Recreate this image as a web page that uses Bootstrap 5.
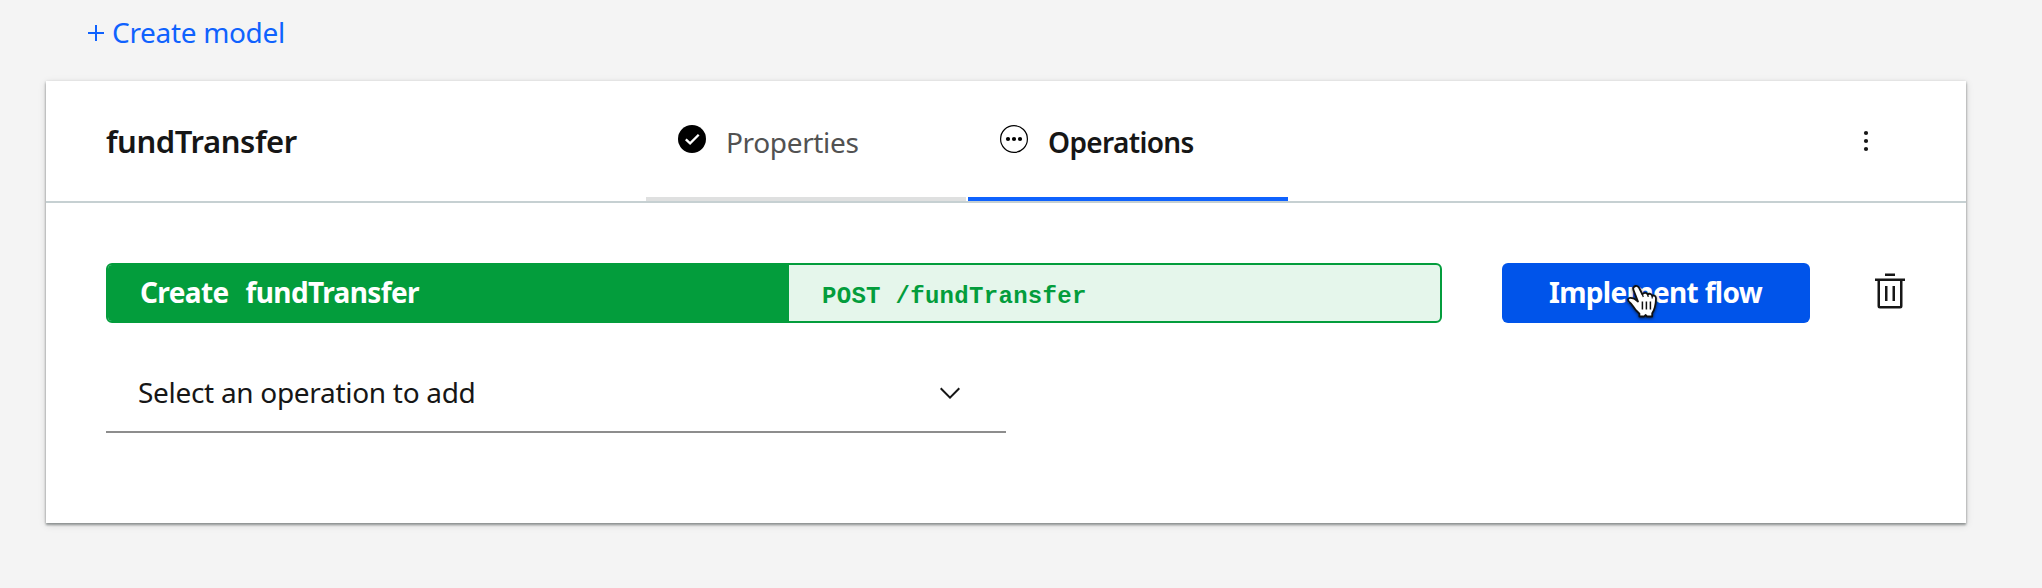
<!DOCTYPE html>
<html lang="en">
<head>
<meta charset="utf-8">
<title>fundTransfer</title>
<link href="https://cdn.jsdelivr.net/npm/bootstrap@5.3.0/dist/css/bootstrap.min.css" rel="stylesheet">
<style>
  body { min-height: 100vh; background: #f4f4f4; color: #161616; font-family: "Noto Sans", "Open Sans", sans-serif; font-size: 28px; font-weight: 400; line-height: 40px; }
  svg { display: block; flex: none; }
  .create-link { color: #0f62fe; height: 81px; padding: 12px 0 0 88px; gap: 8px; letter-spacing: -.32px; }
  .create-link svg { margin-top: 13px; }
  .model-panel { margin: 0 76px 0 46px; height: 442px; background: #fff; box-shadow: 0 2px 2px rgba(80,88,88,.45), 0 1px 3px rgba(0,0,0,.2), 0 2px 8px rgba(0,0,0,.12); }
  .model-head { height: 122px; border-bottom: 2px solid #c6d0d2; padding-left: 60px; padding-right: 84px; }
  .model-name { width: 540px; font-size: 31px; font-weight: 600; letter-spacing: -.4px; padding: 40px 0 0; }
  .steps { gap: 2px; }
  .step { width: 320px; height: 120px; border-bottom: 4px solid #dfe0e0; padding: 41px 0 0 30px; gap: 18px; color: #525252; letter-spacing: -.35px; }
  .step.active { border-color: #0f62fe; color: #161616; font-weight: 600; letter-spacing: -.65px; }
  .kebab { margin-top: 42px; }
  .model-body { padding: 60px 0 60px 60px; }
  .op-bar { width: 1336px; height: 60px; border-radius: 6px; border: 2px solid #039d3c; background: #e5f6eb; color: #039d3c; overflow: hidden; }
  .op-name { width: 681px; background: #039d3c; color: #fff; font-weight: 700; padding: 7px 0 0 32px; letter-spacing: -.62px; gap: 17px; }
  .op-path { font: 700 24px/40px "Liberation Mono", monospace; letter-spacing: .3px; padding: 12px 0 0 33px; white-space: pre; }
  .btn-flow { width: 308px; height: 60px; margin-left: 60px; border: 0; border-radius: 6px; background: #0054ea; color: #fff; font-size: 28px; font-weight: 700; line-height: 40px; letter-spacing: -.7px; padding: 9px 1px 11px 0; }
  .btn-flow:hover { background: #0054ea; color: #fff; }
  .pointer-hand { left: 122px; top: 20px; }
  .bin { margin: 8px 0 0 60px; }
  .op-select { width: 900px; height: 80px; margin-top: 30px; border-bottom: 2px solid #8d8d8d; padding: 19px 40px 0 32px; letter-spacing: -.3px; }
  .op-select svg { margin-top: 5px; }
</style>
</head>
<body>
<a class="create-link d-flex align-items-start text-decoration-none" href="#">
  <svg width="16" height="16"><path d="M8 0v16M0 8h16" stroke="#0f62fe" stroke-width="2"/></svg>
  <span>Create model</span>
</a>
<main class="model-panel">
  <header class="model-head d-flex align-items-start">
    <div class="model-name">fundTransfer</div>
    <nav class="steps d-flex">
      <div class="step d-flex align-items-start">
        <svg width="32" height="32" viewBox="0 0 32 32"><circle cx="16" cy="17" r="14"/><path d="M9.8 17.3l4.3 4.1 8.6-8.6" fill="none" stroke="#fff" stroke-width="2.3"/></svg>
        <span>Properties</span>
      </div>
      <div class="step active d-flex align-items-start">
        <svg width="32" height="32" viewBox="0 0 32 32"><circle cx="16" cy="17" r="13.4" fill="none" stroke="#000" stroke-width="1.2"/><circle cx="10" cy="17" r="2.1"/><circle cx="16" cy="17" r="2.1"/><circle cx="22" cy="17" r="2.1"/></svg>
        <span>Operations</span>
      </div>
    </nav>
    <svg class="kebab ms-auto" width="32" height="36" viewBox="0 0 32 36" fill="#161616"><circle cx="16" cy="10" r="2.1"/><circle cx="16" cy="18" r="2.1"/><circle cx="16" cy="26" r="2.1"/></svg>
  </header>
  <section class="model-body">
    <div class="d-flex">
      <div class="op-bar d-flex">
        <div class="op-name d-flex"><span>Create</span><span>fundTransfer</span></div>
        <div class="op-path">POST /fundTransfer</div>
      </div>
      <button class="btn btn-flow position-relative" type="button">Implement flow
        <svg class="pointer-hand position-absolute" width="36" height="42" viewBox="0 0 36 42">
          <g style="filter:drop-shadow(0 1.5px 1.5px rgba(0,0,0,.6))">
            <path d="M11.6 3C9.5 3.5 8.8 5.2 9.5 7.2L14 18.5C11.8 16.4 8.6 14.7 6 14.9C3.8 15.2 3.3 17.2 5 18.7C8.2 21 9.5 24.6 12.2 27.5L15.4 30.6V33.5H20.2L21.5 32L23 33.5H28.2V30.3C31 26.3 31.8 21 32 15.8C32.1 12.8 29.6 11.8 28.2 13C27.7 10.6 24.8 10.2 23.7 11.6C22.6 9.5 20.3 9.4 18.3 11.3L15.2 5C14.3 3.4 13 2.7 11.6 3Z" fill="#fff" stroke="#111" stroke-width="1.8" stroke-linejoin="round"/>
            <path d="M18.4 18.5V26.5M22.4 18.5V26.5M26.4 18.5V26.5" fill="none" stroke="#111" stroke-width="1.5"/>
            <path d="M18.3 11.3l1 2.7M23.7 11.6l.5 2.4M28.2 13v2.5" fill="none" stroke="#111" stroke-width="1.2"/>
          </g>
        </svg>
      </button>
      <svg class="bin" width="40" height="40" viewBox="0 0 32 32" fill="#161616"><path d="M12 12h2v12h-2zM18 12h2v12h-2zM4 6v2h2v20a2 2 0 0 0 2 2h16a2 2 0 0 0 2-2V8h2V6zM8 28V8h16v20zM12 2h8v2h-8z"/></svg>
    </div>
    <div class="op-select d-flex justify-content-between">
      <span>Select an operation to add</span>
      <svg width="32" height="32" viewBox="0 0 16 16" fill="#161616"><path d="M8 11L3 6l.7-.7L8 9.6l4.3-4.3.7.7z"/></svg>
    </div>
  </section>
</main>
<script src="https://cdn.jsdelivr.net/npm/bootstrap@5.3.0/dist/js/bootstrap.bundle.min.js"></script>
</body>
</html>
